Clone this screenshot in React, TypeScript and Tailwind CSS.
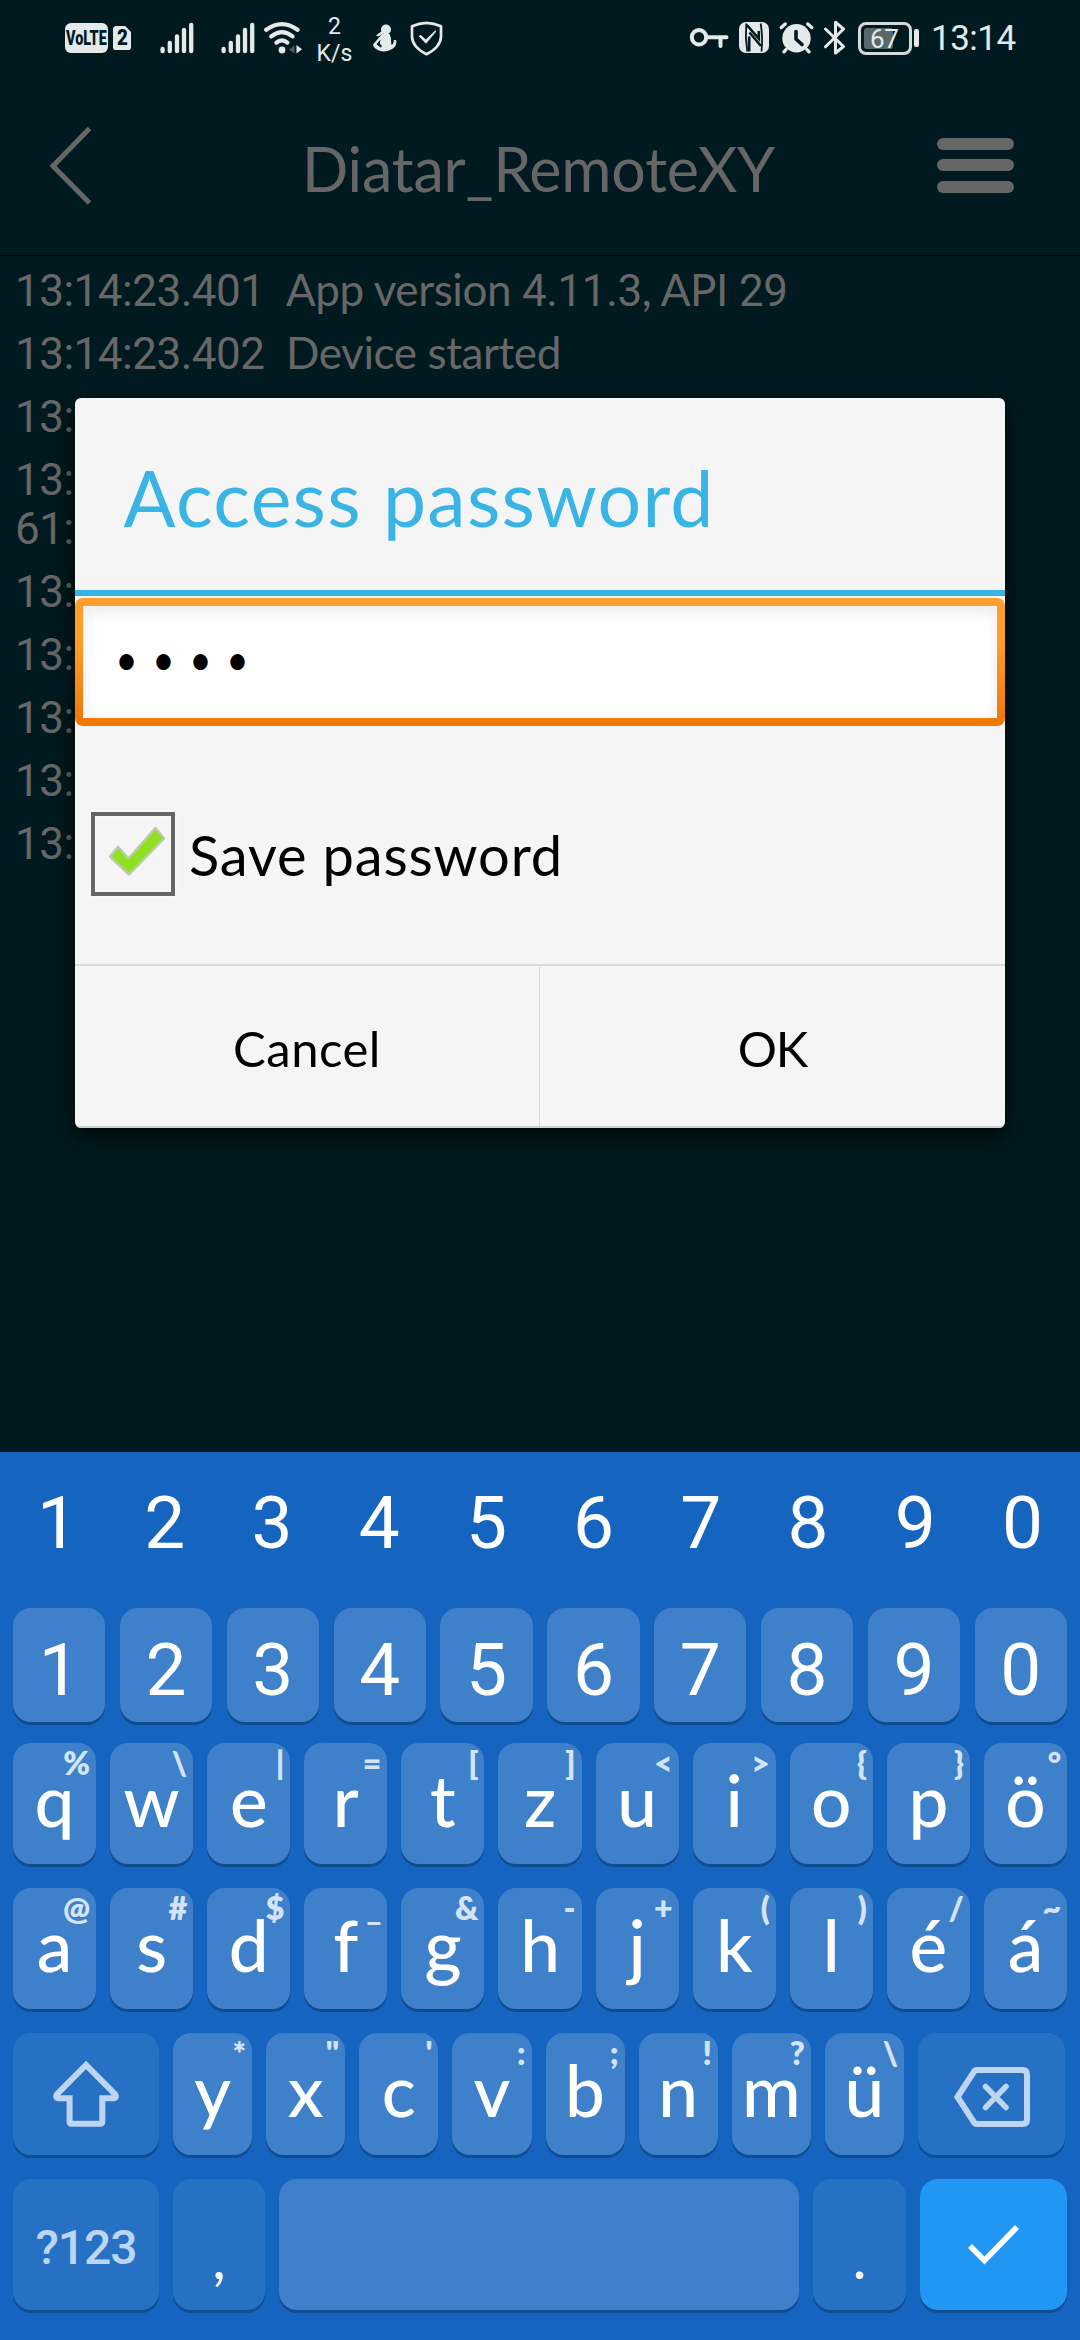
import React from "react";

const FG = "#e4e9ea";

/* Digits are set in Roboto, letters in Lato. */
function Mixed({ text }: { text: string }) {
  return (
    <>
      {text.split(/([\d.:]+)/).map((part, i) =>
        i % 2 ? (
          <span key={i} className="font-['Roboto',sans-serif] leading-[0]">
            {part}
          </span>
        ) : (
          part
        ),
      )}
    </>
  );
}

function Signal() {
  return (
    <svg className="h-[32px] w-[34px]" viewBox="0 0 34 32" stroke={FG} strokeWidth="4.3" strokeLinecap="round">
      <path d="M2.6 27v2.2M9.8 20.8v8.4M17 14.3v14.9M24 7.8v21.4M31.2 2.8v26.4" />
    </svg>
  );
}

function StatusBar() {
  return (
    <div className="flex h-[75px] items-start text-[#e4e9ea]">
      <div className="ml-[65px] mt-[23px] flex h-[30px] w-[43px] items-center justify-center rounded-[6px] bg-[#e4e9ea]">
        <span className="scale-x-[0.72] font-['Roboto',sans-serif] text-[20px] leading-none font-black text-[#001a1f]">VoLTE</span>
      </div>
      <div className="mt-[26px] ml-[5px] flex h-[24px] w-[18px] items-center justify-center bg-[#e4e9ea] [clip-path:polygon(8%_3%,12%_0,68%_0,100%_25%,100%_92%,93%_100%,7%_100%,0_92%,0_8%)]">
        <span className="scale-x-[0.85] font-['Roboto',sans-serif] text-[22px] leading-none font-black text-[#001a1f]">2</span>
      </div>
      <div className="mt-[22px] ml-[29px] h-[32px]">
        <Signal />
      </div>
      <div className="mt-[22px] ml-[27px] h-[32px]">
        <Signal />
      </div>
      <svg className="mt-[20px] ml-[8px] h-[36px] w-[40px]" viewBox="0 0 40 36" fill="none" stroke={FG} strokeWidth="4.2" strokeLinecap="round">
        <path d="M3.2 9.8Q19 -1.5 34.5 9.8" />
        <path d="M8.2 16.4Q19 8 29.6 16.4" />
        <path d="M13.4 22.6Q19 18 24.4 22.6" />
        <circle cx="19" cy="30" r="3.4" fill={FG} stroke="none" />
        <path d="M31.5 25.5v8l-5.5-4z" fill="#4b5c60" stroke="none" />
        <path d="M33.5 25v8.5l5.5-4.2z" fill={FG} stroke="none" />
      </svg>
      <div className="mt-[12.5px] ml-[10px] w-[43px] text-center font-['Roboto',sans-serif] text-[23px] leading-[27.5px]">
        <div>2</div>
        <div>K/s</div>
      </div>
      <svg className="mt-[24px] ml-[16px] h-[29px] w-[26px]" viewBox="0 0 26 29" fill={FG}>
        <circle cx="14" cy="5.5" r="5" />
        <path d="M10.5 6.5 4 11.5l2.2 1 5.5-3.2z" />
        <path d="M10 10h7.500q1.800 3.500 1.500 7l.5 4q2.500-1 2.300-5h2.400q1.200 6.500-5 9.500-5 2.800-11 1.500Q1.500 24.500 1 20.500z" />
        <path d="m8.500 15.500-4 4.700 4.600 3.600.7-2-2-2.300z" fill="#001a1f" />
      </svg>
      <svg className="mt-[20px] ml-[11px] h-[36px] w-[35px]" viewBox="0 0 35 36" fill="none" stroke={FG} strokeWidth="2.700">
        <path d="M17.500 2.800q7.500.2 14.500 3.400v10.500q-.5 10.500-14.500 17.500-14-7-14.500-17.500V6.200q7-3.200 14.500-3.400z" strokeLinejoin="round" />
        <path d="m9.800 16.300 1.600-1.500 5.500 4.800 9.500-9.300.8 1.100-10.200 12.300z" fill={FG} stroke="none" />
      </svg>

      <svg className="mt-[26px] ml-[245px] h-[24px] w-[40px]" viewBox="0 0 40 24" fill="none" stroke={FG} strokeWidth="4">
        <circle cx="10" cy="11.300" r="7.200" />
        <path d="M17.500 11.300H37.500M31.500 12v8" strokeLinecap="round" />
      </svg>
      <svg className="mt-[22px] ml-[10px] h-[31px] w-[30px]" viewBox="0 0 30 31">
        <rect x="0" y="0" width="30" height="31" rx="7" fill={FG} />
        <path d="M7.300 1.500q-1.300 14 1 28M22.500 29.500q1.500-14-.8-28" stroke="#001a1f" strokeWidth="1.800" fill="none" />
        <path d="m7.800 3 12 13.500V9M10.200 14.500V29.500M10.500 10.500 22 24" stroke="#001a1f" strokeWidth="2.600" fill="none" />
      </svg>
      <svg className="mt-[21px] ml-[10px] h-[33px] w-[35px]" viewBox="0 0 35 33" stroke={FG} strokeWidth="3.400" strokeLinecap="round">
        <path d="M2.300 6.500 6.200 3M32.700 6.500 28.800 3M7 28.500 5 30.800M28 28.500l2 2.300" />
        <circle cx="17.500" cy="17.200" r="14.200" fill={FG} stroke="none" />
        <path d="M17 10.500v7.500l6 5.500" fill="none" stroke="#001a1f" strokeWidth="3.600" />
      </svg>
      <svg className="mt-[20px] ml-[9px] h-[35px] w-[24px]" viewBox="0 0 24 35" fill="none" stroke={FG} strokeWidth="3" strokeLinejoin="round" strokeLinecap="round">
        <path d="M2.500 9 20.500 26.500 12.500 33V2.200l8 6.800L2.500 26.800" />
      </svg>
      <div className="mt-[22px] ml-[11px] flex h-[33px] w-[54px] rounded-[8px] border-[3px] border-[#d3dadb] p-[3px]">
        <div className="h-full w-[29px] rounded-[3px] bg-[#586769]">
          <div className="pl-[6px] font-['Roboto',sans-serif] text-[26px] leading-[22px] tracking-[-0.4px]">67</div>
        </div>
      </div>
      <div className="mt-[29px] ml-[2px] h-[18px] w-[5px] rounded-[2px] bg-[#e4e9ea]" />
      <div className="mt-[18px] ml-[12px] font-['Roboto',sans-serif] text-[35px] leading-[42px] tracking-[-0.500px]">13:14</div>
    </div>
  );
}

function Header() {
  return (
    <div className="flex h-[181px] items-start border-b-[1px] border-black text-[#666666]">
      <svg className="mt-[50px] ml-[48px] h-[82px] w-[46px]" viewBox="0 0 46 82" fill="none" stroke="#666666" strokeWidth="5">
        <path d="M41.500 3.500 5 41l36.500 37" />
      </svg>
      <div className="ml-[208px] mt-[53.500px] w-[500px] font-['Lato',sans-serif] text-[61px] leading-[80px] tracking-[-0.200px]">Diatar_RemoteXY</div>
      <div className="mt-[62.500px] ml-[135px] flex w-[77px] flex-col gap-[9.500px]">
        <div className="h-[12px] rounded-full bg-[#666666]" />
        <div className="h-[12px] rounded-full bg-[#666666]" />
        <div className="h-[12px] rounded-full bg-[#666666]" />
      </div>
    </div>
  );
}

function LogLine({ time, text }: { time: string; text?: string }) {
  return (
    <div className="mb-[14px] flex font-['Lato',sans-serif] text-[44px] leading-[49px]">
      <div className="w-[271px] tracking-[-0.500px]">
        <Mixed text={time} />
      </div>
      {text && <div className="tracking-[-0.400px]"><Mixed text={text} /></div>}
    </div>
  );
}

function Dialog() {
  return (
    <div className="absolute top-[398px] left-[75px] h-[730px] w-[930px] overflow-hidden rounded-[6px] bg-[#f5f5f5] text-black font-['Lato',sans-serif]">
      <div className="flex h-[198px] items-center border-b-[6px] border-[#35b5e5] pt-[6px] pl-[48.500px] text-[77px] leading-[80px] tracking-[1.300px] text-[#39b4e4]">
        Access password
      </div>
      <div className="h-[2px] bg-[#fafafa]" />
      <div className="h-[128px] rounded-[8px] bg-linear-to-b from-[#fd9f2d] from-30% to-[#f07808] to-95% p-[8px]">
        <div className="flex h-full items-center bg-white pl-[25px] shadow-[inset_0_8px_14px_#f1f1f1,inset_0_0_12px_#f1f1f1]">
          {[0, 1, 2, 3].map((i) => (
            <span key={i} className="mb-[8px] w-[37px] scale-x-[0.9] text-center text-[43px] leading-none">•</span>
          ))}
        </div>
      </div>
      <div className="flex h-[238px] items-center pl-[16px]">
        <div className="mt-[17px] flex h-[84px] w-[84px] items-center justify-center border-[4px] border-[#666] bg-[#f5f5f5] shadow-[0_0_4px_#fff,inset_0_0_3px_#fff]">
          <svg className="mb-[5px] ml-[5px] h-[54px] w-[62px]" viewBox="0 0 62 54">
            <path d="M5 32.500 13 23l10.500 11.500L50.500 4l8.500 10.500L24 50.500z" fill="#8fe01f" stroke="#bccbaa" strokeWidth="2.500" strokeLinejoin="round" />
          </svg>
        </div>
        <div className="mt-[20px] ml-[14px] text-[56px] leading-[60px] tracking-[0.850px]">Save password</div>
      </div>
      <div className="grid h-[164px] grid-cols-2 border-t-[2px] border-b-[2px] border-t-[#dadada] border-b-[#cdd1d1] text-[49px]">
        <div className="flex items-center justify-center border-r border-[#dadada] pt-[5px] tracking-[0.500px]">Cancel</div>
        <div className="flex items-center justify-center pt-[5px] tracking-[-1.200px]">OK</div>
      </div>
    </div>
  );
}

const keyShape = "flex items-center justify-center rounded-[18px] shadow-[0_3px_0_#0f4c90]";

function LetterRow({ keys }: { keys: string[][] }) {
  return (
    <>
      {keys.map(([k, hint]) => (
        <div key={k} className={`${keyShape} relative min-w-0 flex-1 bg-[#3f80ca] pb-[9px] text-[71px] leading-none font-medium`}>
          {k}
          <span className="absolute top-[2px] right-[6px] text-[32px] leading-[36px] font-extrabold text-[#d3e4f9]">{hint}</span>
        </div>
      ))}
    </>
  );
}

const digits = ["1", "2", "3", "4", "5", "6", "7", "8", "9", "0"];
const rowQ = [["q", "%"], ["w", "\\"], ["e", "|"], ["r", "="], ["t", "["], ["z", "]"], ["u", "<"], ["i", ">"], ["o", "{"], ["p", "}"], ["ö", "°"]];
const rowA = [["a", "@"], ["s", "#"], ["d", "$"], ["f", "_"], ["g", "&"], ["h", "-"], ["j", "+"], ["k", "("], ["l", ")"], ["é", "/"], ["á", "~"]];
const rowY = [["y", "*"], ["x", '"'], ["c", "'"], ["v", ":"], ["b", ";"], ["n", "!"], ["m", "?"], ["ü", "\\"]];

function Keyboard() {
  return (
    <div className="flex h-[888px] flex-col bg-[#1565c0] pl-[13px] pr-[13px] font-['Lato',sans-serif] text-white">
      <div className="-mx-[9px] flex h-[156px] pt-[31px] font-['Roboto',sans-serif] text-[73px] leading-[80px]">
        {digits.map((d) => (
          <div key={d} className="flex-1 text-center">{d}</div>
        ))}
      </div>
      <div className="flex h-[114px] gap-[14.500px] font-['Roboto',sans-serif] text-[73px] leading-none">
        {digits.map((d) => (
          <div key={d} className={`${keyShape} flex-1 bg-[#3f80ca] pt-[11px]`}>{d}</div>
        ))}
      </div>
      <div className="mt-[21px] flex h-[121px] gap-[14px]">
        <LetterRow keys={rowQ} />
      </div>
      <div className="mt-[24px] flex h-[121px] gap-[14px]">
        <LetterRow keys={rowA} />
      </div>
      <div className="mt-[24px] flex h-[122px] gap-[14px]">
        <div className={`${keyShape} w-[146px] bg-[#2671c4]`}>
          <svg className="h-[70px] w-[70px]" viewBox="0 0 70 70" fill="none" stroke="#bdd5f1" strokeWidth="6" strokeLinejoin="round">
            <path d="M35 6 5.800 35.300q-2 3.200 1.200 4H18.600V62.500q0 2.300 2.300 2.300H49q2.300 0 2.300-2.300V39.300H63q3.200-.8 1.200-4z" strokeLinejoin="miter" />
          </svg>
        </div>
        <LetterRow keys={rowY} />
        <div className={`${keyShape} mr-[2px] w-[147px] bg-[#2671c4]`}>
          <svg className="mt-[6px] h-[64px] w-[78px]" viewBox="0 0 78 64" fill="none" stroke="#bdd5f1" strokeWidth="6">
            <path d="M24 5H69.500q4.500 0 4.500 4.500V54.500q0 4.500-4.500 4.500H24q-2 0-3-1.700L4.500 32 21 6.700Q22 5 24 5z" />
            <path d="m32.500 21.500 20.500 21M53 21.500l-20.500 21" strokeLinecap="round" strokeWidth="5.500" />
          </svg>
        </div>
      </div>
      <div className="mt-[24px] flex h-[131px] gap-[14px]">
        <div className={`${keyShape} w-[146px] bg-[#2671c4] pt-[6px] font-['Roboto',sans-serif] text-[48px] leading-none font-medium tracking-[-1px] text-[#bdd5f1]`}>?123</div>
        <div className={`${keyShape} w-[92px] bg-[#2671c4] pt-[22px] text-[60px] leading-none`}>,</div>
        <div className={`${keyShape} flex-1 bg-[#3f80ca]`} />
        <div className={`${keyShape} w-[93px] bg-[#2671c4] pt-[22px] text-[60px] leading-none`}>.</div>
        <div className={`${keyShape} w-[147px] bg-[#2196f3]`}>
          <svg className="h-[44px] w-[56px]" viewBox="0 0 56 44" fill="none" stroke="white" strokeWidth="5.500">
            <path d="M4 23 18.500 37.500 51 4" />
          </svg>
        </div>
      </div>
    </div>
  );
}

export default function App() {
  return (
    <div className="relative flex h-[2340px] w-[1080px] flex-col overflow-hidden bg-[#001a1f]">
      <StatusBar />
      <Header />
      <div className="flex-1 pt-[8.500px] pl-[15px] text-[#676767]">
        <LogLine time="13:14:23.401" text="App version 4.11.3, API 29" />
        <LogLine time="13:14:23.402" text="Device started" />
        <LogLine time="13:" />
        <div className="-mb-[14px]">
          <LogLine time="13:" />
        </div>
        <LogLine time="61:" />
        <LogLine time="13:" />
        <LogLine time="13:" />
        <LogLine time="13:" />
        <LogLine time="13:" />
        <LogLine time="13:" />
      </div>
      <Keyboard />
      <div className="absolute top-[398px] left-[75px] h-[730px] w-[930px] rounded-[6px] shadow-[0_8px_22px_rgba(0,0,0,0.75)]" />
      <Dialog />
    </div>
  );
}
